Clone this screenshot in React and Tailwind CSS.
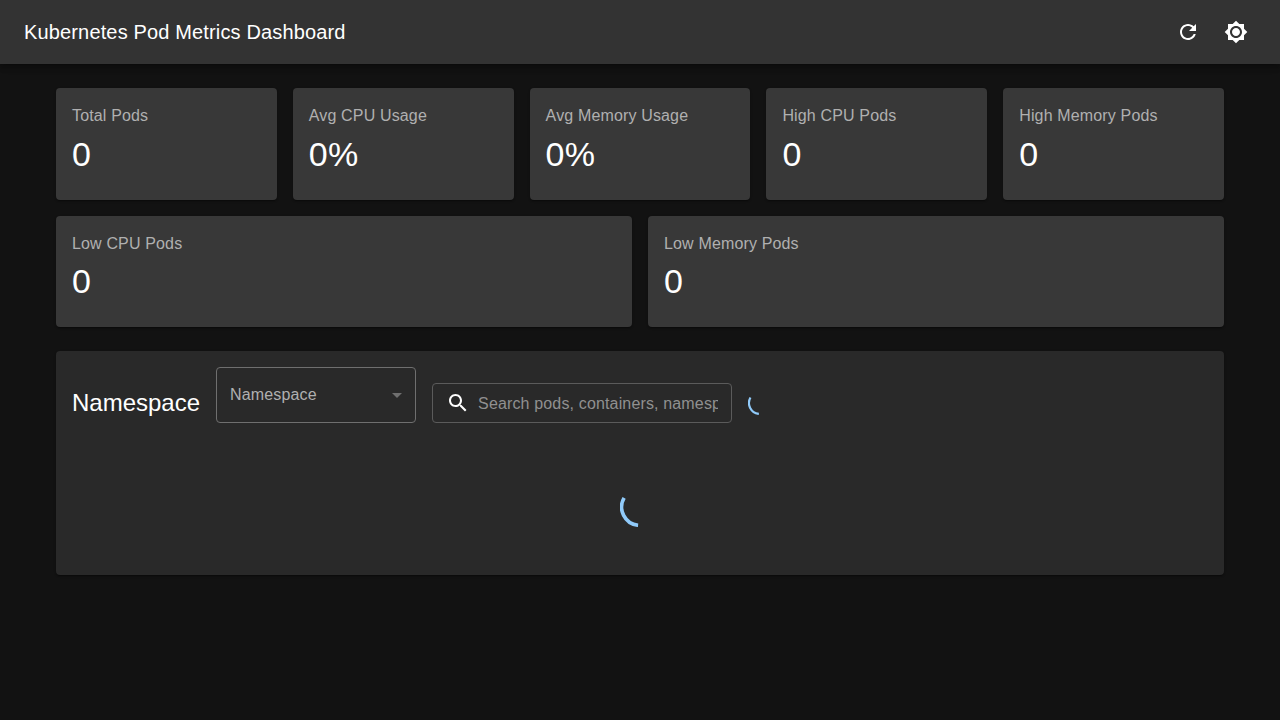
import React from "react";

const topStats = [
  { label: "Total Pods", value: "0" },
  { label: "Avg CPU Usage", value: "0%" },
  { label: "Avg Memory Usage", value: "0%" },
  { label: "High CPU Pods", value: "0" },
  { label: "High Memory Pods", value: "0" },
];

const lowStats = [
  { label: "Low CPU Pods", value: "0" },
  { label: "Low Memory Pods", value: "0" },
];

const paperShadow =
  "shadow-[0px_2px_1px_-1px_rgba(0,0,0,0.2),0px_1px_1px_0px_rgba(0,0,0,0.14),0px_1px_3px_0px_rgba(0,0,0,0.12)]";

function Icon({ d, className }) {
  return (
    <svg viewBox="0 0 24 24" fill="currentColor" className={className}>
      <path d={d} />
    </svg>
  );
}

function Spinner({ className }) {
  return (
    <svg viewBox="22 22 44 44" fill="none" className={className}>
      <path d="M41.89 64.09A20.2 20.2 0 0 1 26.5 33.9" stroke="#90caf9" strokeWidth="4" />
    </svg>
  );
}

function StatCard({ label, value }) {
  return (
    <div className={`min-w-0 flex-1 rounded bg-[#383838] px-4 pt-4 pb-6 ${paperShadow}`}>
      <div className="mb-[5.6px] text-base leading-6 tracking-[0.00938em] text-[#b0b0b0]">{label}</div>
      <div className="text-[34px] leading-[1.235] tracking-[0.00735em]">{value}</div>
    </div>
  );
}

export default function App() {
  return (
    <div className="min-h-screen bg-[#121212] font-['Liberation_Sans',Arial,sans-serif] text-white">
      <header className="relative flex h-16 items-center bg-[#333333] px-6 shadow-[0px_2px_4px_-1px_rgba(0,0,0,0.2),0px_4px_5px_0px_rgba(0,0,0,0.14),0px_1px_10px_0px_rgba(0,0,0,0.12)]">
        <h1 className="grow text-xl leading-8 tracking-[0.0075em]">Kubernetes Pod Metrics Dashboard</h1>
        <button className="mr-2 p-2" aria-label="Refresh">
          <Icon
            className="size-6"
            d="M17.65 6.35C16.2 4.9 14.21 4 12 4c-4.42 0-7.99 3.58-7.99 8s3.57 8 7.99 8c3.73 0 6.84-2.55 7.73-6h-2.08c-.82 2.33-3.04 4-5.65 4-3.31 0-6-2.69-6-6s2.69-6 6-6c1.66 0 3.14.69 4.22 1.78L13 11h7V4l-2.35 2.35z"
          />
        </button>
        <button className="p-2" aria-label="Toggle theme">
          <Icon
            className="size-6"
            d="M20 8.69V4h-4.69L12 .69 8.69 4H4v4.69L.69 12 4 15.31V20h4.69L12 23.31 15.31 20H20v-4.69L23.31 12 20 8.69zM12 18c-3.31 0-6-2.69-6-6s2.69-6 6-6 6 2.69 6 6-2.69 6-6 6zm0-10c-2.21 0-4 1.79-4 4s1.79 4 4 4 4-1.79 4-4-1.79-4-4-4z"
          />
        </button>
      </header>

      <main className="mx-auto max-w-[1216px] px-6 pt-6">
        <div className="mb-4 flex gap-4">
          {topStats.map((s) => (
            <StatCard key={s.label} {...s} />
          ))}
        </div>
        <div className="mb-6 flex gap-4">
          {lowStats.map((s) => (
            <StatCard key={s.label} {...s} />
          ))}
        </div>

        <section className={`rounded bg-[#292929] p-4 ${paperShadow}`}>
          <div className="mb-4 flex items-center gap-4">
            <h2 className="text-2xl leading-[1.334]">Namespace</h2>
            <div className="mb-4 flex h-14 w-[200px] items-center justify-between rounded border border-[#6f6f6f] pr-[6px] pl-[13px]">
              <span className="text-base leading-6 tracking-[0.00938em] text-[#b0b0b0]">Namespace</span>
              <Icon className="size-6 text-[#6f6f6f]" d="M7 10l5 5 5-5z" />
            </div>
            <div className="flex h-10 w-[300px] items-center rounded border border-[#5b5b5b] px-[13px]">
              <Icon
                className="mr-2 size-6 shrink-0"
                d="M15.5 14h-.79l-.28-.27C15.41 12.59 16 11.11 16 9.5 16 5.91 13.09 3 9.5 3S3 5.91 3 9.5 5.91 16 9.5 16c1.61 0 3.09-.59 4.23-1.57l.27.28v.79l5 4.99L20.49 19l-4.99-5zm-6 0C7.01 14 5 11.99 5 9.5S7.01 5 9.5 5 14 7.01 14 9.5 11.99 14 9.5 14z"
              />
              <input
                placeholder="Search pods, containers, namespaces..."
                className="h-6 min-w-0 flex-1 bg-transparent pt-0.5 text-base tracking-[0.00938em] text-white outline-none placeholder:text-[#909090]"
              />
            </div>
            <Spinner className="size-6" />
          </div>
          <div className="flex justify-center p-8">
            <Spinner className="size-10" />
          </div>
        </section>
      </main>
    </div>
  );
}
